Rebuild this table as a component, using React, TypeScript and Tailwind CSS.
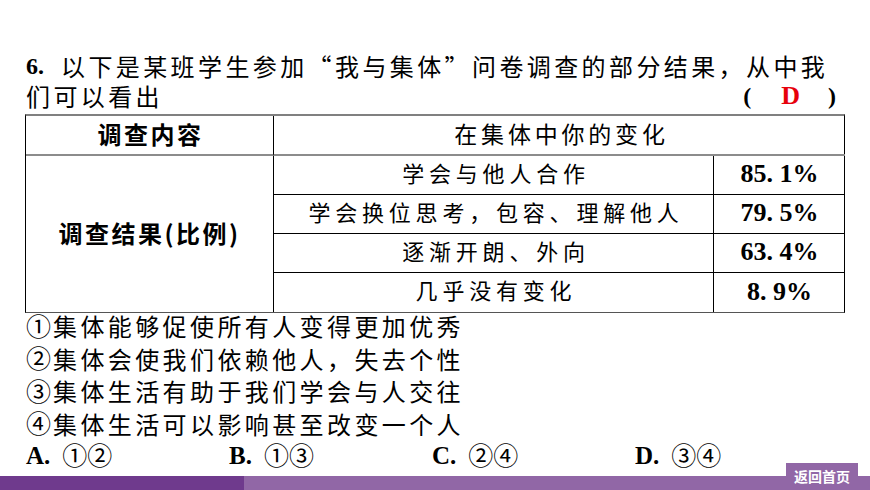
import React from "react";

const cjk = "font-['Noto_Sans_CJK_SC',sans-serif]";
const serif = "font-['Liberation_Serif','Noto_Sans_CJK_SC',serif]";

const rows: [string, string][] = [
  ["学会与他人合作", "85. 1%"],
  ["学会换位思考，包容、理解他人", "79. 5%"],
  ["逐渐开朗、外向", "63. 4%"],
  ["几乎没有变化", "8. 9%"],
];

const options: [string, string][] = [
  ["①", "集体能够促使所有人变得更加优秀"],
  ["②", "集体会使我们依赖他人，失去个性"],
  ["③", "集体生活有助于我们学会与人交往"],
  ["④", "集体生活可以影响甚至改变一个人"],
];

const choices: [string, string][] = [
  ["A.", "①②"],
  ["B.", "①③"],
  ["C.", "②④"],
  ["D.", "③④"],
];

export default function App() {
  return (
    <div className={`w-[870px] h-[490px] bg-white text-black flex flex-col ${cjk}`}>
      <div className="pt-[51px] pl-[26px]">
        <div className="h-[30px] leading-[30px] text-[24px] whitespace-nowrap flex items-center">
          <span className={`${serif} font-bold`}>6.</span>
          <span className={`ml-[17px] tracking-[3.4px] ${cjk}`}>
            以下是某班学生参加“我与集体”问卷调查的部分结果，从中我
          </span>
        </div>
        <div className="h-[30px] leading-[30px] text-[24px] w-[810px] flex items-center justify-between">
          <span className="tracking-[3.4px]">们可以看出</span>
          <span className={`${serif} font-bold flex items-center`}>
            <span>(</span>
            <span className="ml-[30px] text-red-600 text-[26px]">D</span>
            <span className="ml-[28px]">)</span>
          </span>
        </div>
      </div>

      <div className="pl-[25px] mt-[3px]">
        <div className="grid grid-cols-[248px_440px_131px] grid-rows-[40px_39px_39px_39px_39px] w-[820px] border-l border-r border-black border-t-2 border-t-[#808080] border-b border-b-[#555]">
          <div className="border-r border-black border-b-2 border-b-[#8c8c8c] flex items-center justify-center text-[24px] font-bold tracking-[2.5px] pl-[2px] pb-[3px]">
            调查内容
          </div>
          <div className="col-span-2 border-b-2 border-b-[#8c8c8c] flex items-center justify-center text-[23px] tracking-[3.8px] pl-[4px] pb-[3px]">
            在集体中你的变化
          </div>
          <div className="row-span-4 border-r border-black flex items-center justify-center text-[24px] font-bold tracking-[2.5px] pb-[3px]">
            调查结果(比例)
          </div>
          {rows.map(([label, pct], i) => (
            <React.Fragment key={i}>
              <div
                className={`border-r border-black ${i < 3 ? "border-b" : ""} flex items-center justify-center text-[22px] tracking-[4.8px] pl-[5px] pb-[6px]`}
              >
                {label}
              </div>
              <div
                className={`${i < 3 ? "border-b border-black" : ""} flex items-center justify-center text-[26px] font-bold pb-[3px] ${serif}`}
              >
                {pct}
              </div>
            </React.Fragment>
          ))}
        </div>
      </div>

      <div className="pl-[26px] text-[24px] leading-[32.5px] -mt-[3px]">
        {options.map(([n, o], i) => (
          <div key={i} className="h-[32.5px] flex items-center whitespace-nowrap">
            <span className="text-[25px] leading-none w-[27px] pb-[2px]">{n}</span>
            <span className="tracking-[3.4px]">{o}</span>
          </div>
        ))}
        <div className="h-[32.5px] flex items-center">
          {choices.map(([l, v], i) => (
            <div key={i} className="w-[203px] flex items-center">
              <span className={`font-bold text-[25px] ${serif}`}>{l}</span>
              <span className="ml-[12px] text-[25px] leading-none pb-[3px]">{v}</span>
            </div>
          ))}
        </div>
      </div>

      <div className="mt-auto relative h-[14px] flex">
        <div className="w-[244px] h-full bg-[#6f3a8d]" />
        <div className="flex-1 h-full bg-[#9167a6]" />
        <div className="absolute right-[12px] bottom-0 w-[72px] h-[27px] bg-[#9167a6] flex items-center justify-center text-white text-[14px] font-bold">
          返回首页
        </div>
      </div>
    </div>
  );
}
